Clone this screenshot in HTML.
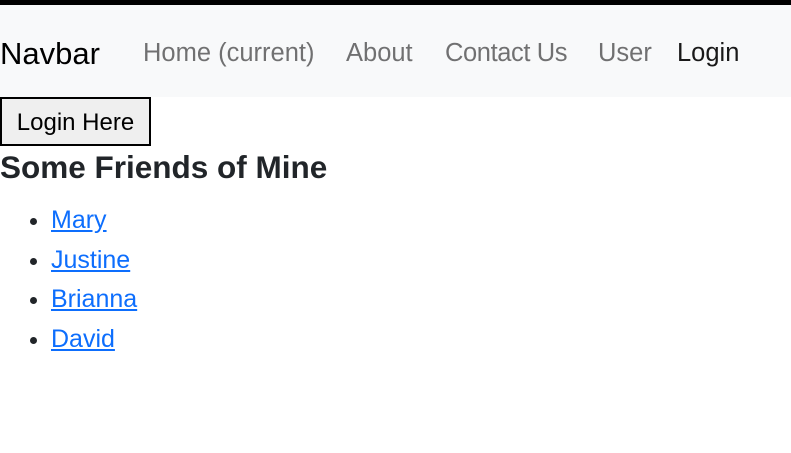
<!DOCTYPE html>
<html><head><style>
body{margin:0;width:791px;height:453px;overflow:hidden;background:#fff;font-family:"Liberation Sans",sans-serif;color:#212529;}
.top{height:5px;background:#000;}
nav{height:92px;background:#f8f9fa;position:relative;}
nav span{position:absolute;top:34px;font-size:25.5px;color:rgba(0,0,0,.55);white-space:nowrap;}
nav .brand{left:0;font-size:31px;top:31px;color:#000;}
button{position:absolute;left:0;top:97px;width:151px;height:49px;border:2px solid #000;background:#efefef;font-family:"Liberation Sans",sans-serif;font-size:24px;color:#000;padding:2px 0 0;}
h2{position:absolute;left:0;top:149px;margin:0;font-size:31.5px;font-weight:600;}
ul{position:absolute;left:0;top:201px;margin:0;padding-left:51px;font-size:25px;line-height:39.6px;}
li{height:39.6px;}
li::marker{color:#212529;}
a{color:#0d6efd;text-decoration:underline;}
</style></head><body>
<div class="top"></div>
<nav>
<span class="brand">Navbar</span>
<span style="left:143px">Home (current)</span>
<span style="left:346px">About</span>
<span style="left:445px;letter-spacing:-0.4px">Contact Us</span>
<span style="left:598px">User</span>
<span style="left:677px;color:rgba(0,0,0,.9)">Login</span>
</nav>
<button>Login Here</button>
<h2>Some Friends of Mine</h2>
<ul><li><a>Mary</a></li><li><a>Justine</a></li><li><a>Brianna</a></li><li><a>David</a></li></ul>
</body></html>
